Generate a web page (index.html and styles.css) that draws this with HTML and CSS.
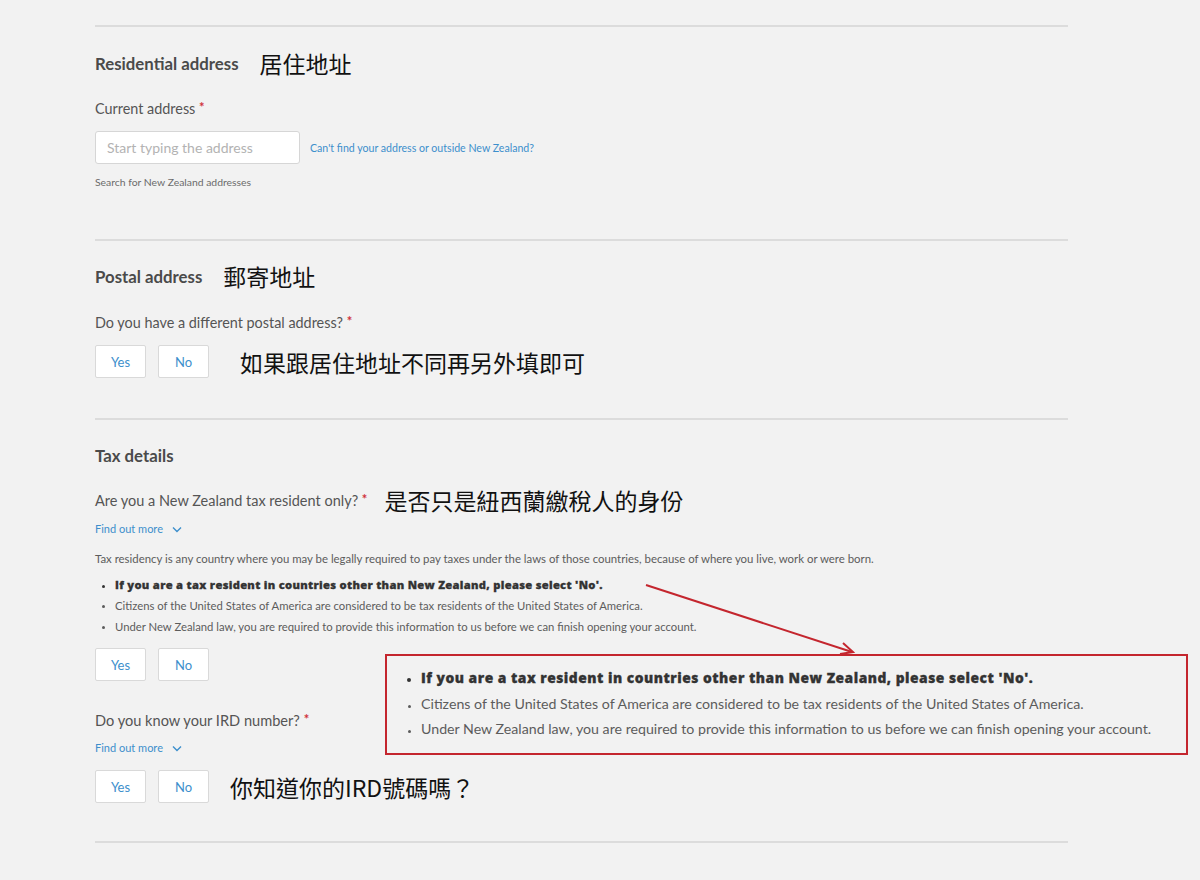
FILE: index.html
```html
<!DOCTYPE html>
<html lang="en">
<head>
<meta charset="utf-8">
<title>Account details</title>
<link rel="stylesheet" href="styles.css">
</head>
<body>
<main class="form">
  <hr class="divider first">
  <section class="section">
    <div class="heading-row heading-first">
      <h2 class="heading">Residential address</h2>
      <span class="note">居住地址</span>
    </div>
    <label class="label label-current">Current address <span class="req">*</span></label>
    <div class="input-row">
      <div class="input">Start typing the address</div>
      <a class="link-small">Can't find your address or outside New Zealand?</a>
    </div>
    <p class="helper">Search for New Zealand addresses</p>
  </section>
  <hr class="divider d2">
  <section class="section">
    <div class="heading-row heading-postal">
      <h2 class="heading">Postal address</h2>
      <span class="note">郵寄地址</span>
    </div>
    <label class="label label-postal">Do you have a different postal address? <span class="req">*</span></label>
    <div class="btn-row btn-postal">
      <button class="btn">Yes</button>
      <button class="btn">No</button>
      <span class="note note-btn1">如果跟居住地址不同再另外填即可</span>
    </div>
  </section>
  <hr class="divider d3">
  <section class="section">
    <div class="heading-row heading-tax">
      <h2 class="heading">Tax details</h2>
    </div>
    <div class="question-row">
      <span class="question">Are you a New Zealand tax resident only? <span class="req">*</span></span>
      <span class="note note-q">是否只是紐西蘭繳稅人的身份</span>
    </div>
    <a class="find-more find1">Find out more
      <svg class="chev" width="10" height="7" viewBox="0 0 10 7"><polyline points="1,1.5 5,5.5 9,1.5" fill="none" stroke="#3d8fcc" stroke-width="1.4"/></svg>
    </a>
    <p class="para">Tax residency is any country where you may be legally required to pay taxes under the laws of those countries, because of where you live, work or were born.</p>
    <ul class="bullets">
      <li class="strong">If you are a tax resident in countries other than New Zealand, please select 'No'.</li>
      <li>Citizens of the United States of America are considered to be tax residents of the United States of America.</li>
      <li>Under New Zealand law, you are required to provide this information to us before we can finish opening your account.</li>
    </ul>
    <div class="btn-row btn-tax">
      <button class="btn">Yes</button>
      <button class="btn">No</button>
    </div>
    <label class="label label-ird">Do you know your IRD number? <span class="req">*</span></label>
    <a class="find-more find2">Find out more
      <svg class="chev" width="10" height="7" viewBox="0 0 10 7"><polyline points="1,1.5 5,5.5 9,1.5" fill="none" stroke="#3d8fcc" stroke-width="1.4"/></svg>
    </a>
    <div class="btn-row btn-ird">
      <button class="btn">Yes</button>
      <button class="btn">No</button>
      <span class="note note-btn2">你知道你的IRD號碼嗎？</span>
    </div>
  </section>
  <hr class="divider d4">
</main>

<div class="callout">
  <ul class="callout-list">
    <li class="strong">If you are a tax resident in countries other than New Zealand, please select 'No'.</li>
    <li>Citizens of the United States of America are considered to be tax residents of the United States of America.</li>
    <li>Under New Zealand law, you are required to provide this information to us before we can finish opening your account.</li>
  </ul>
</div>
<svg class="arrow" width="1200" height="880" viewBox="0 0 1200 880">
  <line x1="646" y1="585" x2="852" y2="652" stroke="#c4262e" stroke-width="2"/>
  <polyline points="843,643 853,652 840,654" fill="none" stroke="#c4262e" stroke-width="2"/>
</svg>
</body>
</html>
```
FILE: styles.css
```css
html, body {
  margin: 0;
  padding: 0;
  background: #f2f2f2;
}
body {
  width: 1200px;
  height: 880px;
  overflow: hidden;
  position: relative;
  font-family: Lato, "Open Sans", "Noto Sans CJK TC", sans-serif;
  color: #555;
}
.form {
  padding-left: 95px;
  width: 973px;
}
.divider {
  border: 0;
  height: 2px;
  background: #dcdcdc;
  margin: 0;
}
.divider.first { margin-top: 25px; }
.divider.d2 { margin-top: 50px; }
.divider.d3 { margin-top: 40px; }
.divider.d4 { margin-top: 38px; }

.section { display: flex; flex-direction: column; align-items: flex-start; }

.heading-row {
  display: flex;
  align-items: center;
  height: 30px;
  gap: 21px;
}
.heading-first { margin-top: 21px; }
.heading-postal { margin-top: 20px; }
.heading-tax { margin-top: 20px; }
.heading {
  margin: 0;
  font-size: 16.8px;
  font-weight: 700;
  color: #4a4a4a;
}
.note {
  font-family: "Noto Sans CJK TC", "Noto Sans CJK SC", sans-serif;
  font-size: 23px;
  color: #111;
  line-height: 30px;
}
.label {
  display: block;
  height: 20px;
  font-size: 14.4px;
  line-height: 20px;
  color: #555;
}
.label-current { margin-top: 21px; }
.label-postal { margin-top: 22px; }
.label-ird { margin-top: 30px; font-size: 14.6px; }
.req { color: #d0313a; font-size: 13px; font-weight: 700; line-height: 0; vertical-align: 2px; }

.input-row {
  display: flex;
  align-items: center;
  gap: 10px;
  margin-top: 12px;
}
.input {
  box-sizing: border-box;
  width: 205px;
  height: 33px;
  background: #fff;
  border: 1px solid #d6d6d6;
  border-radius: 3px;
  padding-left: 11px;
  font-size: 14px;
  line-height: 31px;
  color: #b3b3b3;
}
.link-small {
  font-size: 10.6px;
  color: #3d8fcc;
  padding-top: 1px;
}
.helper {
  margin: 11px 0 0;
  height: 14px;
  font-size: 10.4px;
  line-height: 14px;
  color: #6b6b6b;
}

.btn-row {
  display: flex;
  align-items: center;
  gap: 12px;
}
.btn-postal { margin-top: 12px; }
.btn-tax { margin-top: 11px; }
.btn-ird { margin-top: 14px; }
.btn {
  box-sizing: border-box;
  width: 51px;
  height: 33px;
  background: #fff;
  border: 1px solid #d9d9d9;
  border-radius: 2px;
  font-family: Lato, sans-serif;
  font-size: 13px;
  color: #3d8fcc;
  padding: 0;
}
.note-btn1 { margin-left: 19px; }
.note-btn2 { margin-left: 9px; }

.question-row {
  display: flex;
  align-items: center;
  height: 30px;
  gap: 17px;
  margin-top: 15px;
}
.question {
  font-size: 14.5px;
  color: #555;
}
.find-more {
  display: flex;
  align-items: center;
  gap: 9px;
  height: 16px;
  font-size: 11px;
  line-height: 16px;
  color: #3d8fcc;
}
.find1 { margin-top: 6px; }
.find2 { margin-top: 9px; }
.chev { display: block; }

.para {
  margin: 14px 0 0;
  height: 16px;
  font-size: 11.4px;
  line-height: 16px;
  color: #5c5c5c;
}
.bullets {
  margin: 7px 0 0;
  padding-left: 20px;
  font-size: 11.3px;
  line-height: 21px;
  color: #5c5c5c;
}
.bullets li { height: 21px; }
.bullets li::marker { font-size: 9px; }
.strong {
  font-family: "Open Sans", Lato, sans-serif;
  font-weight: 800;
  color: #333;
  -webkit-text-stroke: 0.3px #333;
}
.bullets .strong { font-size: 11.2px; letter-spacing: 0.3px; }

.callout {
  position: absolute;
  left: 385px;
  top: 654px;
  width: 803px;
  height: 101px;
  box-sizing: border-box;
  border: 2px solid #c4262e;
  background: #f2f2f2;
}
.callout-list {
  margin: 9px 0 0;
  padding-left: 34px;
  font-size: 14.2px;
  line-height: 25.5px;
  color: #5c5c5c;
}
.callout-list .strong { font-size: 13.8px; letter-spacing: 0.5px; }
.callout-list li::marker { font-size: 10px; }
.arrow {
  position: absolute;
  left: 0;
  top: 0;
  pointer-events: none;
}
```
